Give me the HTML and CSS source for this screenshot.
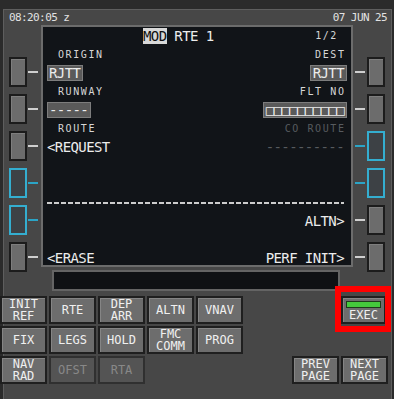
FILE: index.html
```html
<!DOCTYPE html>
<html>
<head>
<meta charset="utf-8">
<link rel="stylesheet" href="styles.css">
</head>
<body>
<div class="panel">
  <div class="topbar"><span>08:20:05 z</span><span>07 JUN 25</span></div>
  <div class="cdu">
    <div class="lsk-col left">
      <div class="lsk"><span class="btn"></span><span class="dash"></span></div>
      <div class="lsk"><span class="btn"></span><span class="dash"></span></div>
      <div class="lsk"><span class="btn"></span><span class="dash"></span></div>
      <div class="lsk cyan"><span class="btn"></span><span class="dash"></span></div>
      <div class="lsk cyan"><span class="btn"></span><span class="dash"></span></div>
      <div class="lsk"><span class="btn"></span><span class="dash"></span></div>
    </div>
    <div class="screen">
      <div class="row"><span class="big title"><span class="mod">MOD</span> RTE 1</span><span class="lbl page">1/2</span></div>
      <div class="row"><span class="lbl ind">ORIGIN</span><span class="lbl rgt">DEST</span></div>
      <div class="row"><span class="big box">RJTT</span><span class="big box rbox">RJTT</span></div>
      <div class="row"><span class="lbl ind">RUNWAY</span><span class="lbl rgt">FLT NO</span></div>
      <div class="row"><span class="big box">-----</span><span class="big box rbox">□□□□□□□□□□</span></div>
      <div class="row"><span class="lbl ind">ROUTE</span><span class="lbl rgt dim">CO ROUTE</span></div>
      <div class="row"><span class="big">&lt;REQUEST</span><span class="big dim">----------</span></div>
      <div class="row"></div>
      <div class="row"></div>
      <div class="row"><span class="dashline"></span></div>
      <div class="row"><span></span><span class="big">ALTN&gt;</span></div>
      <div class="row"></div>
      <div class="row"><span class="big">&lt;ERASE</span><span class="big">PERF INIT&gt;</span></div>
    </div>
    <div class="lsk-col right">
      <div class="lsk"><span class="dash"></span><span class="btn"></span></div>
      <div class="lsk"><span class="dash"></span><span class="btn"></span></div>
      <div class="lsk cyan"><span class="dash"></span><span class="btn"></span></div>
      <div class="lsk cyan"><span class="dash"></span><span class="btn"></span></div>
      <div class="lsk"><span class="dash"></span><span class="btn"></span></div>
      <div class="lsk"><span class="dash"></span><span class="btn"></span></div>
    </div>
    <div class="scratch"></div>
  </div>
  <div class="keypad">
    <div class="keys-main">
      <div class="key"><span>INIT</span><span>REF</span></div>
      <div class="key"><span>RTE</span></div>
      <div class="key"><span>DEP</span><span>ARR</span></div>
      <div class="key"><span>ALTN</span></div>
      <div class="key"><span>VNAV</span></div>
      <div class="key"><span>FIX</span></div>
      <div class="key"><span>LEGS</span></div>
      <div class="key"><span>HOLD</span></div>
      <div class="key"><span>FMC</span><span>COMM</span></div>
      <div class="key"><span>PROG</span></div>
      <div class="key"><span>NAV</span><span>RAD</span></div>
      <div class="key off"><span>OFST</span></div>
      <div class="key off"><span>RTA</span></div>
    </div>
    <div class="keys-side">
      <div class="exec-wrap">
        <div class="key exec"><span class="lamp"></span><span>EXEC</span></div>
        <div class="highlight"></div>
      </div>
      <div class="key prev"><span>PREV</span><span>PAGE</span></div>
      <div class="key next"><span>NEXT</span><span>PAGE</span></div>
    </div>
  </div>
</div>
</body>
</html>
```
FILE: styles.css
```css
* { box-sizing: border-box; }
html, body { margin: 0; padding: 0; }
body {
  background: #2b2b2b;
  width: 394px;
  height: 399px;
  overflow: hidden;
  font-family: "DejaVu Sans Mono", monospace;
}
.panel {
  margin: 9px 0 0 3px;
  width: 389px;
  height: 390px;
  background: #474747;
  border: 1px solid #5e5e5e;
  border-bottom: none;
}
.topbar {
  height: 15px;
  display: flex;
  justify-content: space-between;
  padding: 0 4px 0 5px;
  color: #e2e2e2;
  font-size: 11px;
  line-height: 15px;
  letter-spacing: -0.6px;
  white-space: pre;
}
.cdu {
  display: grid;
  grid-template-columns: 37px 312px 38px;
  grid-template-rows: 242px 24px;
}
.lsk-col {
  grid-row: 1 / 3;
  display: flex;
  flex-direction: column;
  gap: 7px;
  padding-top: 32px;
}
.lsk-col.left { grid-column: 1; }
.lsk-col.right { grid-column: 3; }
.lsk { display: flex; align-items: center; height: 30px; }
.lsk-col.left .lsk { padding-left: 5px; gap: 1px; }
.lsk-col.right .lsk { padding-left: 2px; gap: 2px; }
.btn {
  width: 18px;
  height: 30px;
  border: 2px solid #1c1c1c;
  background: #6c6c6c;
  box-shadow: inset 1px 1px 0 #7e7e7e;
}
.dash { width: 10px; height: 2px; background: #cfcfcf; }
.lsk.cyan .btn { border-color: #34aed0; background: #3d4145; box-shadow: none; }
.lsk.cyan .dash { background: #2ba4c6; }

.screen {
  grid-column: 2;
  grid-row: 1;
  border: 2px solid #6c6c6c;
  background: #111418;
  display: grid;
  grid-template-rows: repeat(13, 18.5px);
  align-content: start;
  padding: 0 7px 0 4px;
}
.row {
  display: flex;
  justify-content: space-between;
  align-items: center;
  white-space: pre;
}
.big {
  font-size: 14px;
  letter-spacing: -0.6px;
  line-height: 16px;
  color: #ececec;
}
.lbl {
  font-size: 10px;
  letter-spacing: 1.6px;
  line-height: 12px;
  color: #d6d6d6;
}
.ind { margin-left: 11px; }
.rgt { margin-right: -1.6px; }
.page { margin-right: 6px; }
.title { margin-left: 96px; }
.mod { background: #d8d8d8; color: #111; padding: 0 0 0 0; }
.box {
  background: #5a5a5a;
  border: 1px solid #7d7d7d;
  padding: 0 2px 0 1px;
  line-height: 14px;
}
.rbox { margin-right: -3px; padding: 0 2px 0 2px; }
.dim { color: #575b5f; }
.dashline {
  flex: 1;
  height: 1.5px;
  background: repeating-linear-gradient(90deg, #cdcdcd 0 5px, transparent 5px 7px);
}

.scratch {
  grid-column: 2;
  grid-row: 2;
  margin: 3px 13px 0 11px;
  height: 21px;
  border: 2px solid #646464;
  background: #0f1114;
}

.keypad {
  display: flex;
  margin: 5px 0 0 -4px;
}
.keys-main {
  display: grid;
  grid-template-columns: repeat(5, 47px);
  grid-auto-rows: 28px;
  gap: 2px;
}
.keys-side {
  margin-left: auto;
  margin-right: 3px;
  display: grid;
  grid-template-columns: 47px 47px;
  grid-template-rows: repeat(3, 28px);
  gap: 2px;
}
.key {
  border: 2px solid #1f1f1f;
  background: #6d6d6d;
  color: #f0f0f0;
  font-size: 12px;
  line-height: 12.5px;
  display: flex;
  flex-direction: column;
  align-items: center;
  justify-content: center;
  box-shadow: inset 1px 1px 0 #858585;
}
.key.off {
  background: #545454;
  color: #888888;
  border-color: #303030;
  box-shadow: none;
}
.exec-wrap {
  grid-column: 2;
  grid-row: 1;
  position: relative;
  width: 45px;
}
.key.exec {
  height: 28px;
  justify-content: flex-start;
  padding-top: 3px;
  gap: 1px;
}
.lamp {
  width: 35px;
  height: 7px;
  background: #44c93c;
  border: 1px solid #1d3a1b;
}
.highlight {
  position: absolute;
  top: -10px;
  bottom: -8px;
  left: -6px;
  right: -5px;
  border: 6px solid #ff0000;
}
.key.prev { grid-column: 1; grid-row: 3; }
.key.next { grid-column: 2; grid-row: 3; }
```
